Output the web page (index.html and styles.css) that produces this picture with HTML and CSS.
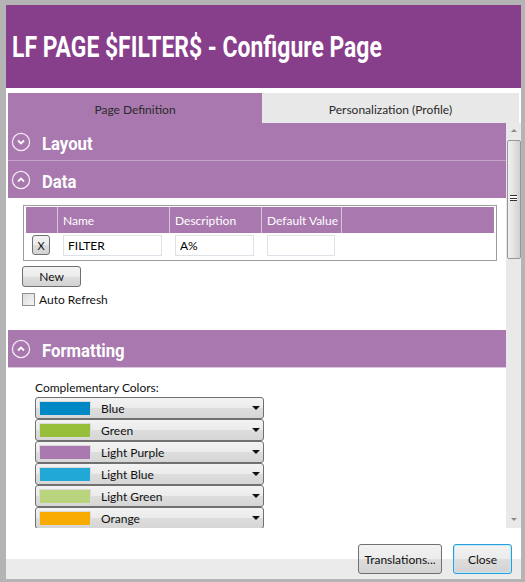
FILE: index.html
```html
<!doctype html>
<html lang="en">
<head>
  <meta charset="UTF-8">
  <title>Configure Page</title>
  <link rel="stylesheet" href="styles.css">
</head>
<body>
<div class="window">
  <header class="titlebar">
    <h1><span>LF PAGE $FILTER$ - Configure Page</span></h1>
  </header>
  <nav class="tabs">
    <div class="tab active">Page Definition</div>
    <div class="tab">Personalization (Profile)</div>
  </nav>
  <div class="main">
    <div class="content">
      <div class="section-head">
        <svg class="toggle" width="20" height="20" viewBox="0 0 20 20"><circle cx="10" cy="10" r="8.6"/><polyline points="7,8.5 10,11.5 13,8.5"/></svg>
        <span>Layout</span>
      </div>
      <div class="section-head sep">
        <svg class="toggle" width="20" height="20" viewBox="0 0 20 20"><circle cx="10" cy="10" r="8.6"/><polyline points="7,11.5 10,8.5 13,11.5"/></svg>
        <span>Data</span>
      </div>
      <div class="data-body">
        <div class="grid">
          <div class="grid-head">
            <div class="cell c0"></div>
            <div class="cell c1">Name</div>
            <div class="cell c2">Description</div>
            <div class="cell c3">Default Value</div>
            <div class="cell c4"></div>
          </div>
          <div class="grid-row">
            <div class="cell c0"><button class="btn del">X</button></div>
            <div class="cell c1"><input class="field w1" type="text" value="FILTER"></div>
            <div class="cell c2"><input class="field w2" type="text" value="A%"></div>
            <div class="cell c3"><input class="field w3" type="text" value=""></div>
            <div class="cell c4"></div>
          </div>
        </div>
        <button class="btn new">New</button>
        <label class="check"><span class="box"></span>Auto Refresh</label>
      </div>
      <div class="section-head under">
        <svg class="toggle" width="20" height="20" viewBox="0 0 20 20"><circle cx="10" cy="10" r="8.6"/><polyline points="7,11.5 10,8.5 13,11.5"/></svg>
        <span>Formatting</span>
      </div>
      <div class="format-body">
        <div class="caption">Complementary Colors:</div>
        <div class="combo"><span class="swatch blue"></span><span class="label">Blue</span><span class="arrow"></span></div>
        <div class="combo"><span class="swatch green"></span><span class="label">Green</span><span class="arrow"></span></div>
        <div class="combo"><span class="swatch lpurple"></span><span class="label">Light Purple</span><span class="arrow"></span></div>
        <div class="combo"><span class="swatch lblue"></span><span class="label">Light Blue</span><span class="arrow"></span></div>
        <div class="combo"><span class="swatch lgreen"></span><span class="label">Light Green</span><span class="arrow"></span></div>
        <div class="combo"><span class="swatch orange"></span><span class="label">Orange</span><span class="arrow"></span></div>
      </div>
    </div>
    <div class="scrollbar">
      <span class="sb-up"></span>
      <div class="thumb"><span class="grip"></span></div>
      <span class="sb-down"></span>
    </div>
  </div>
  <footer class="footer">
    <button class="btn wide">Translations...</button>
    <button class="btn close">Close</button>
  </footer>
</div>
</body>
</html>
```

FILE: styles.css
```css
html, body { margin: 0; padding: 0; }
body { background: #b4b4b4; height: 582px; overflow: hidden; }
* { box-sizing: border-box; font-family: "Segoe UI", Lato, "Open Sans", sans-serif; }

.window { margin: 5px 4px 0 6px; height: 574px; background: #fff; display: flex; flex-direction: column; }

.titlebar { height: 83px; background: #873e8b; display: flex; align-items: center; padding: 0 0 0 6px; }
h1 { margin: 0; color: #fff; font-weight: bold; font-size: 29px; line-height: 1; white-space: nowrap; }
h1 span { display: inline-block; font-family: Roboto, sans-serif; font-weight: 700; transform: scaleX(0.79); transform-origin: left center; }

.tabs { margin: 5px 2px 0 2px; height: 30px; display: grid; grid-template-columns: 254px 1fr; }
.tab { background: #e8e8e8; color: #2b2b2b; font-size: 12px; display: flex; align-items: center; justify-content: center; padding-top: 2px; }
.tab.active { background: #a878ae; }

.main { height: 405px; display: flex; padding-left: 2px; }
.content { width: 498px; overflow: hidden; }

.section-head { height: 37px; background: #a878ae; color: #fff; display: flex; align-items: center; padding-left: 3px; }
.section-head.sep { height: 38px; border-top: 1px solid #c5a3c9; }
.section-head.under { height: 38px; border-bottom: 1px solid #dcc6de; }
.section-head span { display: inline-block; font-family: Roboto, sans-serif; font-weight: 700; font-size: 19px; transform: scaleX(0.88); transform-origin: left center; margin: 4px 0 0 11px; }
.toggle { fill: none; stroke: #f3e8f4; stroke-width: 1.3; }
.toggle polyline { stroke-width: 1.8; stroke: #fff; }

.data-body { padding: 7px 9px 23px 14px; }
.grid { margin-left: 1px; border: 1px solid #9d9d9d; padding: 1px 2px; }
.grid-head, .grid-row { display: flex; height: 26px; }
.grid-head { background: #a878ae; color: #fff; font-size: 12px; }
.grid-head .cell { border-right: 1px solid #d6c6d8; display: flex; align-items: center; padding-left: 5px; }
.grid-head .c4 { border-right: 0; }
.grid-row .cell { display: flex; align-items: flex-start; padding: 2px 0 0 5px; }
.c0 { width: 32px; }
.c1 { width: 112px; }
.c2 { width: 92px; }
.c3 { width: 80px; }
.c4 { flex: 1; }

.field { height: 21px; border: 1px solid #dde2e8; font-size: 12px; padding: 0 0 0 4px; color: #000; outline: none; }
.w1 { width: 99px; }
.w2 { width: 79px; }
.w3 { width: 68px; }

.btn { border: 1px solid #707070; border-radius: 3px; background: linear-gradient(#f3f3f3 0%, #ebebeb 50%, #dddddd 51%, #d3d3d3 100%); font-size: 12px; color: #111; padding: 0; cursor: pointer; }
.del { width: 18px; height: 20px; margin-left: 1px; font-size: 11px; }
.new { display: block; width: 59px; height: 21px; margin: 5px 0 0 0; }

.check { display: flex; align-items: center; height: 16px; margin-top: 4px; font-size: 12px; color: #111; }
.check .box { width: 13px; height: 13px; border: 1px solid #8f8f8f; background: linear-gradient(135deg, #dcdcdc, #f5f5f5); margin-right: 4px; }

.format-body { padding: 11px 0 0 27px; }
.caption { height: 16px; margin-bottom: 2px; font-size: 12px; color: #111; display: flex; align-items: center; }
.combo { width: 229px; height: 22px; border: 1px solid #707070; border-radius: 3px; background: linear-gradient(#f3f3f3 0%, #ebebeb 50%, #dddddd 51%, #d6d6d6 100%); display: flex; align-items: center; padding-left: 3px; font-size: 12px; color: #111; }
.swatch { width: 52px; height: 15px; border: 1px solid #dadada; }
.label { flex: 1; margin-left: 10px; }
.arrow { width: 0; height: 0; border-left: 4px solid transparent; border-right: 4px solid transparent; border-top: 4px solid #111; margin-right: 3px; }
.blue { background: #0088c4; }
.green { background: #97bf3b; }
.lpurple { background: #a878ae; }
.lblue { background: #21a8d7; }
.lgreen { background: #bad47e; }
.orange { background: #f8ab00; }

.scrollbar { width: 15px; background: #e9e9e9; display: flex; flex-direction: column; align-items: center; }
.sb-up, .sb-down { width: 0; height: 0; border-left: 3px solid transparent; border-right: 3px solid transparent; }
.sb-up { border-bottom: 3px solid #8a8a8a; margin-top: 6px; }
.sb-down { border-top: 3px solid #8a8a8a; margin-top: auto; margin-bottom: 7px; }
.thumb { margin-top: 8px; width: 14px; height: 119px; border: 1px solid #979797; border-radius: 2px; background: linear-gradient(90deg, #f0f0f0, #e2e2e2 50%, #d0d0d0); display: flex; align-items: center; justify-content: center; padding-bottom: 3px; }
.grip { width: 7px; height: 6px; border-top: 1px solid #333; border-bottom: 1px solid #333; background: linear-gradient(#fff 2px, #333 2px, #333 3px, #fff 3px); }

.footer { height: 51px; background: linear-gradient(#fff 31px, #ebebeb 31px); display: flex; justify-content: flex-end; align-items: flex-start; gap: 11px; padding: 16px 9px 0 0; }
.wide { width: 84px; height: 30px; }
.close { width: 59px; height: 30px; border-color: #26a0da; box-shadow: inset 0 0 0 1px #c4e6f7; }
```
